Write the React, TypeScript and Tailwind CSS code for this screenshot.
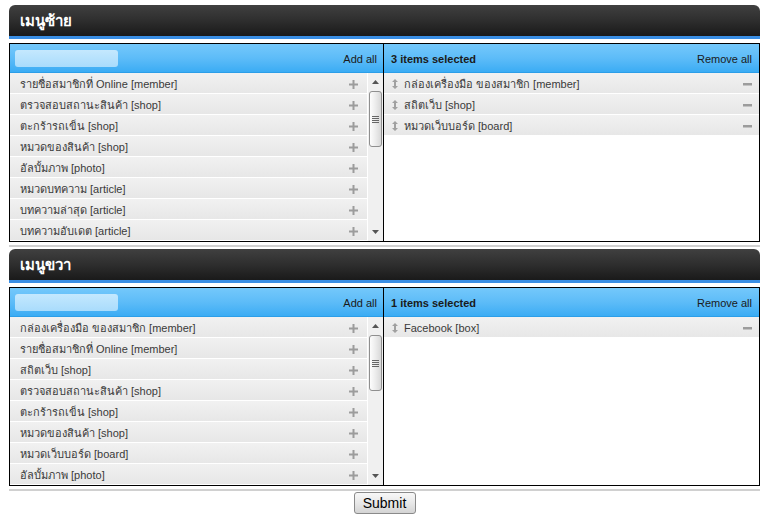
import React from "react";

type Section = {
  title: string;
  available: string[];
  selected: string[];
};

const sections: Section[] = [
  {
    title: "เมนูซ้าย",
    available: [
      "รายชื่อสมาชิกที่ Online [member]",
      "ตรวจสอบสถานะสินค้า [shop]",
      "ตะกร้ารถเข็น [shop]",
      "หมวดของสินค้า [shop]",
      "อัลบั้มภาพ [photo]",
      "หมวดบทความ [article]",
      "บทความล่าสุด [article]",
      "บทความอับเดต [article]",
    ],
    selected: [
      "กล่องเครื่องมือ ของสมาชิก [member]",
      "สถิตเว็บ [shop]",
      "หมวดเว็บบอร์ด [board]",
    ],
  },
  {
    title: "เมนูขวา",
    available: [
      "กล่องเครื่องมือ ของสมาชิก [member]",
      "รายชื่อสมาชิกที่ Online [member]",
      "สถิตเว็บ [shop]",
      "ตรวจสอบสถานะสินค้า [shop]",
      "ตะกร้ารถเข็น [shop]",
      "หมวดของสินค้า [shop]",
      "หมวดเว็บบอร์ด [board]",
      "อัลบั้มภาพ [photo]",
    ],
    selected: ["Facebook [box]"],
  },
];

const PlusIcon = () => (
  <svg width="9" height="9" viewBox="0 0 9 9" className="shrink-0">
    <rect x="3.5" y="0" width="2" height="9" fill="#9c9c9c" />
    <rect x="0" y="3.5" width="9" height="2" fill="#9c9c9c" />
  </svg>
);

const MinusIcon = () => (
  <svg width="9" height="3" viewBox="0 0 9 3" className="shrink-0">
    <rect x="0" y="0" width="9" height="2.5" fill="#9c9c9c" />
  </svg>
);

const DragIcon = () => (
  <svg width="6" height="10" viewBox="0 0 6 10" className="shrink-0">
    <path d="M3 0 L6 3 L4 3 L4 7 L6 7 L3 10 L0 7 L2 7 L2 3 L0 3 Z" fill="#a0a0a0" />
  </svg>
);

function PaneHeader({ children }: { children: React.ReactNode }) {
  return (
    <div className="h-[29px] flex items-center justify-between pt-[2px] bg-gradient-to-b from-[#74c8fb] via-[#5dbcf8] to-[#3aacf4] border-b border-[#2c9ee8]">
      {children}
    </div>
  );
}

function Scrollbar() {
  return (
    <div className="w-[16px] shrink-0 flex flex-col bg-[#f0f0f0] border-l border-white">
      <div className="h-[18px] flex items-center justify-center">
        <svg width="7" height="4" viewBox="0 0 7 4">
          <path d="M0 4 L3.5 0 L7 4 Z" fill="#555" />
        </svg>
      </div>
      <div className="mx-[1px] h-[56px] rounded-[3px] border border-[#8f8f8f] bg-gradient-to-r from-[#fdfdfd] via-[#ececec] to-[#d8d8d8] flex items-center justify-center">
        <div className="flex flex-col gap-[1px]">
          <div className="w-[7px] h-[1px] bg-[#666]" />
          <div className="w-[7px] h-[1px] bg-[#666]" />
          <div className="w-[7px] h-[1px] bg-[#666]" />
          <div className="w-[7px] h-[1px] bg-[#666]" />
        </div>
      </div>
      <div className="flex-1" />
      <div className="h-[18px] flex items-center justify-center">
        <svg width="7" height="4" viewBox="0 0 7 4">
          <path d="M0 0 L7 0 L3.5 4 Z" fill="#555" />
        </svg>
      </div>
    </div>
  );
}

function Row({ children }: { children: React.ReactNode }) {
  return (
    <div className="h-[21px] flex items-center pt-[2px] border-b border-white bg-gradient-to-b from-[#f1f1f1] to-[#e7e7e7] text-[#3a3a3a]">
      {children}
    </div>
  );
}

function Picker({ section }: { section: Section }) {
  return (
    <div className="flex border border-black h-[199px]">
      {/* available */}
      <div className="w-[374px] flex flex-col border-r border-black">
        <PaneHeader>
          <div className="ml-[5px] -mt-[2px] w-[103px] h-[17px] rounded-[3px] bg-gradient-to-b from-[#c4e8fe] to-[#a9dcfc]" />
          <span className="mr-[6px] text-[#1a1a1a]">Add all</span>
        </PaneHeader>
        <div className="flex flex-1 overflow-hidden">
          <div className="flex-1 flex flex-col">
            {section.available.map((item) => (
              <Row key={item}>
                <span className="flex-1 pl-[10px] whitespace-nowrap">{item}</span>
                <span className="w-[26px] flex justify-center pr-[2px]">
                  <PlusIcon />
                </span>
              </Row>
            ))}
          </div>
          <Scrollbar />
        </div>
      </div>
      {/* selected */}
      <div className="flex-1 flex flex-col">
        <PaneHeader>
          <span className="ml-[7px] font-bold text-[#1a1a1a]">
            {section.selected.length} items selected
          </span>
          <span className="mr-[7px] text-[#1a1a1a]">Remove all</span>
        </PaneHeader>
        <div className="flex-1 flex flex-col bg-white">
          {section.selected.map((item) => (
            <Row key={item}>
              <span className="w-[20px] flex justify-center pl-[1px]">
                <DragIcon />
              </span>
              <span className="flex-1 whitespace-nowrap">{item}</span>
              <span className="w-[24px] flex justify-center">
                <MinusIcon />
              </span>
            </Row>
          ))}
        </div>
      </div>
    </div>
  );
}

export default function App() {
  return (
    <div
      className="w-[767px] h-[519px] bg-white overflow-hidden text-[11px]"
      style={{ fontFamily: '"Liberation Sans", Arial, sans-serif' }}
    >
      <div className="ml-[9px] w-[751px] pt-[5px] flex flex-col gap-[2px]">
        {sections.map((section) => (
          <div key={section.title}>
            <div className="h-[31px] rounded-t-[6px] bg-gradient-to-b from-[#404040] via-[#2e2e2e] to-[#1a1a1a] flex items-center pt-[2px] px-[11px]">
              <span className="text-white font-bold text-[15px]">{section.title}</span>
            </div>
            <div className="h-[3px] bg-[#3a8ee4]" />
            <div className="h-[4px]" />
            <Picker section={section} />
            <div className="h-[3px]" />
            <div className="h-[2px] bg-[#d0d0d0]" />
          </div>
        ))}
        <div className="flex justify-center -mt-[1px]">
          <button className="h-[22px] w-[62px] rounded-[3px] border border-[#8a8a8a] bg-gradient-to-b from-[#f8f8f8] via-[#e8e8e8] to-[#d4d4d4] text-[14px] text-black">
            Submit
          </button>
        </div>
      </div>
    </div>
  );
}
